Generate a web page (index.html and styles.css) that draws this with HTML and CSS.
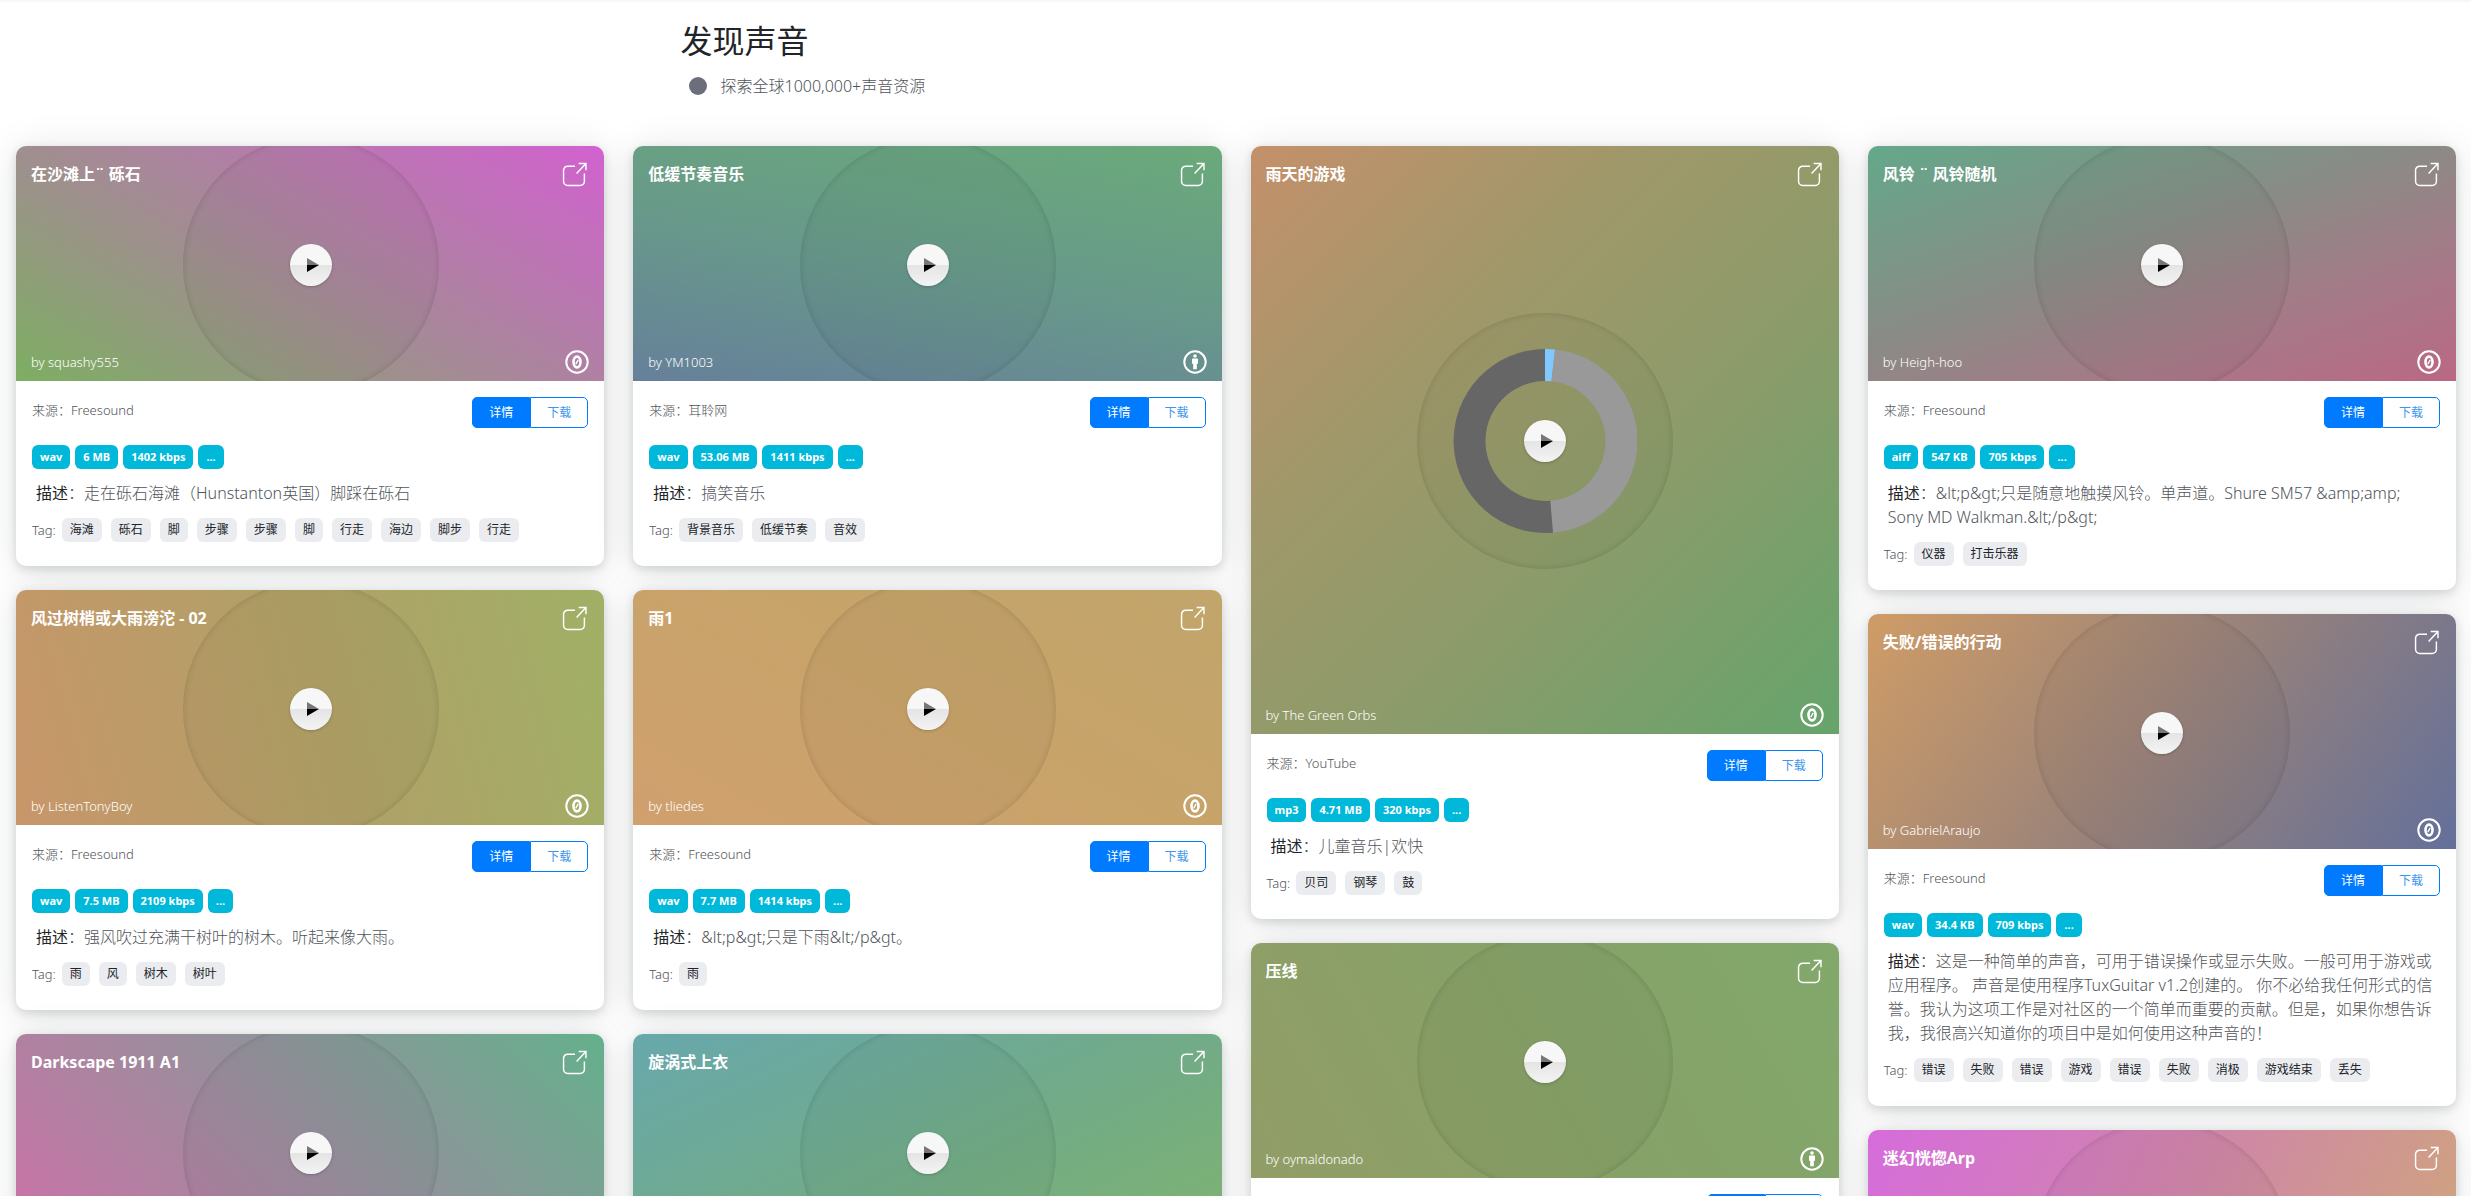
FILE: index.html
```html
<!DOCTYPE html>
<html lang="zh-CN">
<head>
<meta charset="utf-8">
<title>发现声音</title>
<meta name="viewport" content="width=device-width, initial-scale=1">
<link rel="stylesheet" href="styles.css">
<script src="cards.js" defer></script>
</head>
<body>
<svg class="sprite" aria-hidden="true">
  <symbol id="i-share" viewBox="0 0 24 24"><path d="M12.500 4H5.500A4 4 0 0 0 1.500 8V18.500A4 4 0 0 0 5.500 22.500H17.500A4 4 0 0 0 21.500 18.500V11M14 11 23 1.500M16 1.500H23V8" fill="none" stroke="currentColor" stroke-width="1.400"/></symbol>
  <symbol id="i-zero" viewBox="0 0 24 24"><circle cx="12" cy="12" r="10.700" fill="none" stroke="currentColor" stroke-width="2"/><ellipse cx="12" cy="12" rx="3.500" ry="5.400" fill="none" stroke="currentColor" stroke-width="2.600"/><path d="M10.800 14.200 13.200 9.800" stroke="currentColor" stroke-width="1.400"/></symbol>
  <symbol id="i-by" viewBox="0 0 24 24"><circle cx="12" cy="12" r="10.700" fill="none" stroke="currentColor" stroke-width="2"/><circle cx="12" cy="6" r="1.800" fill="currentColor"/><path d="M9.800 8.500h4.400a.8.8 0 0 1 .8.8v4.500h-1.200v5.400h-3.600v-5.400H9V9.300a.8.8 0 0 1 .8-.8z" fill="currentColor"/></symbol>
</svg>
<header class="intro">
  <h1>发现声音</h1>
  <p><span class="dot"></span>探索全球1000,000+声音资源</p>
</header>
<main class="grid" id="grid"></main>
</body>
</html>
```
FILE: styles.css
```css
* { box-sizing: border-box; }
body {
  margin: 0;
  background: #fff;
  color: #212529;
  font: 300 16px/24px "Noto Sans", "Noto Sans CJK SC", sans-serif;
  box-shadow: inset 0 3px 3px -2px rgba(0, 0, 0, .06);
}
h1, h2, p { margin: 0; }
.sprite { display: none; }
.intro { max-width: 1140px; margin: 0 auto; padding: 21px 15px 48px; }
.intro h1 { font-size: 32px; line-height: 40px; font-weight: 400; }
.intro p { display: flex; align-items: center; gap: 14px; margin-top: 13px; padding-left: 8px; color: #50545a; }
.dot { width: 18px; height: 18px; border-radius: 50%; background: #6c6f7b; }

.grid { display: grid; grid-template-columns: repeat(4, minmax(0, 1fr)); gap: 29px; align-items: start; padding: 0 15px 24px 16px; }
.column { display: flex; flex-direction: column; gap: 24px; }
.card { border-radius: 10px; background: #fff; box-shadow: 0 3px 10px rgba(20, 30, 40, .16), 0 4px 40px rgba(20, 30, 40, .11); }

.cover { position: relative; display: flex; flex-direction: column; justify-content: space-between; height: 235px; padding: 16px 15px 7px; border-radius: 10px 10px 0 0; overflow: hidden; color: #fff; }
.cover.square { height: auto; aspect-ratio: 1; }
.row { display: flex; justify-content: space-between; }
.row.bottom { align-items: center; }
.cover h2 { font-size: 16px; line-height: 24px; font-weight: 700; }
.cover .by { font-size: 13px; font-weight: 300; line-height: 24px; }
.share { position: relative; z-index: 1; width: 25px; height: 25px; margin-right: 2px; color: #fff; }
.share svg { display: block; width: 25px; height: 25px; }
.license { width: 24px; height: 24px; }

.disc { position: absolute; inset: -10px 0 -12px 1px; margin: auto; width: 256px; height: 256px; border-radius: 50%; background: rgba(0, 0, 0, .03); box-shadow: inset 0 0 6px rgba(0, 0, 0, .14); display: grid; place-items: center; }
.ring { grid-area: 1 / 1; width: 184px; height: 184px; }
.play { grid-area: 1 / 1; width: 42px; height: 42px; padding: 0; border: 0; border-radius: 50%; background: linear-gradient(#f7f7f7 50%, #e4e4e4 50%, #f4f4f4); box-shadow: 0 1px 3px rgba(0, 0, 0, .2); }
.play svg { display: block; width: 42px; height: 42px; }

.body { padding: 16px 16px 24px; }
.source { font-size: 13px; line-height: 26px; color: #50545a; }
.actions { display: flex; }
.actions button { width: 58px; height: 31px; padding: 0; border: 1px solid #007bff; font: 400 12px/20px "Noto Sans", "Noto Sans CJK SC", sans-serif; background: #fff; color: #3d96ec; border-radius: 0 5px 5px 0; }
.actions .primary { background: #007bff; color: #fff; border-radius: 5px 0 0 5px; }
.badges { display: flex; gap: 5px; margin-top: 17px; }
.badges span { padding: 0 8px; border-radius: 6px; background: #00b8d9; color: #fff; font-size: 11px; font-weight: 700; line-height: 24px; }
.desc { margin: 12px 4px 13px; color: #50545a; }
.desc b { font-weight: 400; color: #212529; }
.tags { display: flex; flex-wrap: wrap; gap: 9px; font-size: 12px; line-height: 24px; }
.tags .label { color: #50545a; font-size: 13px; margin-right: -3px; }
.tags a { padding: 0 8px; border-radius: 6px; background: #ebecf0; color: #212529; font-weight: 400; text-decoration: none; }
```
FILE: cards.js
```js
const columns = [
  [
    { title: '在沙滩上¨ 砾石', by: 'squashy555', lic: 'zero', bg: 'linear-gradient(30deg, #7dae62, #d261d0)', from: 'Freesound', info: ['wav', '6 MB', '1402 kbps'], desc: '走在砾石海滩（Hunstanton英国）脚踩在砾石', tags: ['海滩', '砾石', '脚', '步骤', '步骤', '脚', '行走', '海边', '脚步', '行走'] },
    { title: '风过树梢或大雨滂沱 - 02', by: 'ListenTonyBoy', lic: 'zero', bg: 'linear-gradient(75deg, #c8966a, #b1a067 50%, #a0b066)', from: 'Freesound', info: ['wav', '7.5 MB', '2109 kbps'], desc: '强风吹过充满干树叶的树木。听起来像大雨。', tags: ['雨', '风', '树木', '树叶'] },
    { title: 'Darkscape 1911 A1', by: 'Darkscape', lic: 'zero', bg: 'linear-gradient(45deg, #d06fa8, #90939a 58%, #64b08c)', from: 'Freesound', info: ['wav'], desc: '', tags: [] }
  ],
  [
    { title: '低缓节奏音乐', by: 'YM1003', lic: 'by', bg: 'linear-gradient(10deg, #66809a, #68998a 50%, #6aaa7a)', from: '耳聆网', info: ['wav', '53.06 MB', '1411 kbps'], desc: '搞笑音乐', tags: ['背景音乐', '低缓节奏', '音效'] },
    { title: '雨1', by: 'tliedes', lic: 'zero', bg: 'linear-gradient(30deg, #d0a06e, #c8a36a 50%, #c1a56a)', from: 'Freesound', info: ['wav', '7.7 MB', '1414 kbps'], desc: '&lt;p&gt;只是下雨&lt;/p&gt。', tags: ['雨'] },
    { title: '旋涡式上衣', by: '', lic: 'zero', bg: 'linear-gradient(155deg, #68a8ac, #72ab86 55%, #80b46e)', from: 'Freesound', info: ['wav'], desc: '', tags: [] }
  ],
  [
    { title: '雨天的游戏', by: 'The Green Orbs', lic: 'zero', square: true, ring: true, bg: 'linear-gradient(135deg, #c4906b, #a0986a 33%, #8d9b6a 60%, #66a46c)', from: 'YouTube', info: ['mp3', '4.71 MB', '320 kbps'], desc: '儿童音乐|欢快', tags: ['贝司', '钢琴', '鼓'] },
    { title: '压线', by: 'oymaldonado', lic: 'by', bg: 'linear-gradient(60deg, #929d66, #86a268 55%, #82a86c)', from: 'Freesound', info: ['wav'], desc: '', tags: [] }
  ],
  [
    { title: '风铃 ¨ 风铃随机', by: 'Heigh-hoo', lic: 'zero', bg: 'linear-gradient(160deg, #64a88a, #8a8b86 45%, #a87888 75%, #ba6884)', from: 'Freesound', info: ['aiff', '547 KB', '705 kbps'], desc: '&lt;p&gt;只是随意地触摸风铃。单声道。Shure SM57 &amp;amp; Sony MD Walkman.&lt;/p&gt;', tags: ['仪器', '打击乐器'] },
    { title: '失败/错误的行动', by: 'GabrielAraujo', lic: 'zero', bg: 'linear-gradient(125deg, #cf9c66, #94807c 55%, #64709a)', from: 'Freesound', info: ['wav', '34.4 KB', '709 kbps'], desc: '这是一种简单的声音，可用于错误操作或显示失败。一般可用于游戏或应用程序。 声音是使用程序TuxGuitar v1.2创建的。 你不必给我任何形式的信誉。我认为这项工作是对社区的一个简单而重要的贡献。但是，如果你想告诉我，我很高兴知道你的项目中是如何使用这种声音的！', tags: ['错误', '失败', '错误', '游戏', '错误', '失败', '消极', '游戏结束', '丢失'] },
    { title: '迷幻恍惚Arp', by: '', lic: 'zero', bg: 'linear-gradient(115deg, #d66cdc, #cf86a8 50%, #cfa878)', from: 'Freesound', info: ['wav'], desc: '', tags: [] }
  ]
];

const esc = (s) => s.replace(/&/g, '&amp;').replace(/</g, '&lt;');
const icon = (id, cls = '') => `<svg class="${cls}" aria-hidden="true"><use href="#i-${id}"/></svg>`;
const ring = `<svg class="ring" viewBox="-92 -92 184 184" aria-hidden="true">
  <path d="M0-92A92 92 0 0 1 10-91.500L6.500-59.700A60 60 0 0 0 0-60Z" fill="#80c8ff"/>
  <path d="M10-91.500A92 92 0 0 1 8 91.700L5.300 59.800A60 60 0 0 0 6.500-59.700Z" fill="#999"/>
  <path d="M8 91.700A92 92 0 1 1 0-92V-60A60 60 0 1 0 5.300 59.800Z" fill="#666"/></svg>`;
const play = `<svg viewBox="0 0 42 42" aria-hidden="true"><path d="M17 14V21H29Z" fill="#777"/><path d="M17 21V28L29 21Z" fill="#000"/></svg>`;

const card = (c) => `<article class="card">
  <div class="cover${c.square ? ' square' : ''}" style="background:${c.bg}">
    <div class="disc">${c.ring ? ring : ''}<button class="play" aria-label="播放">${play}</button></div>
    <div class="row"><h2>${esc(c.title)}</h2><a class="share" href="#" aria-label="分享">${icon('share')}</a></div>
    <div class="row bottom"><span class="by">by ${esc(c.by)}</span>${icon(c.lic, 'license')}</div>
  </div>
  <div class="body">
    <div class="row"><span class="source">来源：${c.from}</span>
      <div class="actions"><button class="primary">详情</button><button>下载</button></div></div>
    <div class="badges">${[...c.info, '...'].map((t) => `<span>${t}</span>`).join('')}</div>
    <p class="desc"><b>描述</b>：${esc(c.desc)}</p>
    <div class="tags"><span class="label">Tag:</span>${c.tags.map((t) => `<a href="#">${t}</a>`).join('')}</div>
  </div>
</article>`;

document.getElementById('grid').innerHTML = columns
  .map((col) => `<div class="column">${col.map(card).join('')}</div>`)
  .join('');
```
